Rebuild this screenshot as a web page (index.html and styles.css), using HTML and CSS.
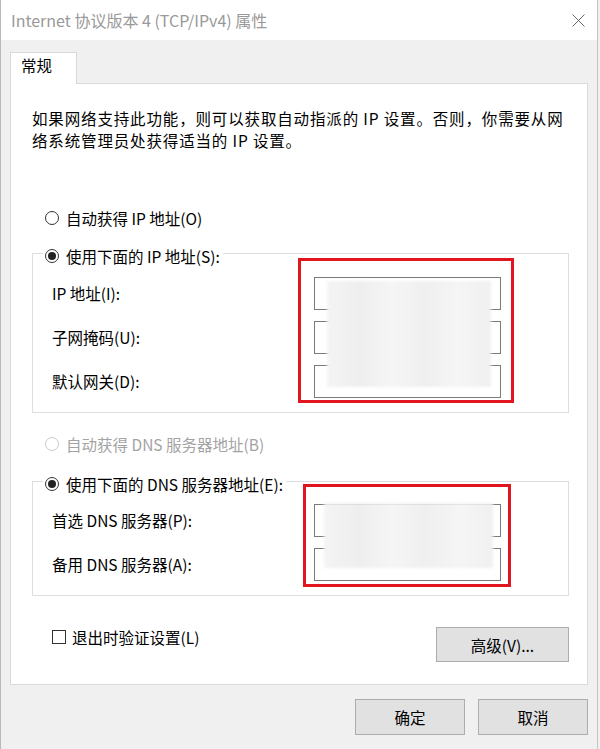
FILE: index.html
```html
<!DOCTYPE html>
<html lang="zh-CN">
<head>
<meta charset="utf-8">
<title>Internet 协议版本 4 (TCP/IPv4) 属性</title>
<link rel="stylesheet" href="styles.css">
</head>
<body>
<div class="window">
  <div class="titlebar">
    <span class="title">Internet 协议版本 4 (TCP/IPv4) 属性</span>
    <svg class="close" width="13" height="13" viewBox="0 0 13 13"><path d="M0.5 0.5 L12.5 12.5 M12.5 0.5 L0.5 12.5" stroke="#666" stroke-width="1" fill="none"/></svg>
  </div>
  <div class="client">
    <div class="tabs"><div class="tab">常规</div></div>
    <div class="panel">
      <p class="desc">如果网络支持此功能，则可以获取自动指派的 IP 设置。否则，你需要从网<br>络系统管理员处获得适当的 IP 设置。</p>

      <div class="opt opt-first"><span class="radio"></span><span>自动获得 IP 地址(O)</span></div>

      <fieldset class="group group-ip">
        <legend><span class="opt-inline"><span class="radio checked"></span><span>使用下面的 IP 地址(S):</span></span></legend>
        <div class="rows">
          <div class="labels">
            <div class="label">IP 地址(I):</div>
            <div class="label">子网掩码(U):</div>
            <div class="label">默认网关(D):</div>
          </div>
          <div class="inputs">
            <div class="field"></div>
            <div class="field"></div>
            <div class="field"></div>
            <div class="blur blur-ip"></div>
            <div class="mark mark-ip"></div>
          </div>
        </div>
      </fieldset>

      <div class="opt opt-disabled"><span class="radio disabled"></span><span>自动获得 DNS 服务器地址(B)</span></div>

      <fieldset class="group group-dns">
        <legend><span class="opt-inline"><span class="radio checked"></span><span>使用下面的 DNS 服务器地址(E):</span></span></legend>
        <div class="rows">
          <div class="labels">
            <div class="label">首选 DNS 服务器(P):</div>
            <div class="label">备用 DNS 服务器(A):</div>
          </div>
          <div class="inputs">
            <div class="field"></div>
            <div class="field"></div>
            <div class="blur blur-dns"></div>
            <div class="mark mark-dns"></div>
          </div>
        </div>
      </fieldset>

      <div class="bottom-row">
        <div class="check-line"><span class="checkbox"></span><span>退出时验证设置(L)</span></div>
        <button class="btn btn-adv">高级(V)...</button>
      </div>
    </div>
    <div class="actions">
      <button class="btn btn-main">确定</button>
      <button class="btn btn-main">取消</button>
    </div>
  </div>
</div>
</body>
</html>
```

FILE: styles.css
```css
* { box-sizing: border-box; }

html, body {
  margin: 0;
  padding: 0;
  background: #f0f0f0;
}

body {
  font-family: "Noto Sans CJK SC", "Microsoft YaHei", sans-serif;
  font-size: 15.5px;
  color: #000;
}

.window {
  width: 598px;
  height: 749px;
  border-left: 1px solid #b9b9b9;
  border-right: 1px solid #c4c4c4;
  background: #f0f0f0;
  overflow: hidden;
}

.titlebar {
  height: 40px;
  background: #fff;
  display: flex;
  align-items: center;
  justify-content: space-between;
  padding: 0 12px 0 10px;
}

.title {
  font-size: 16px;
  color: #999;
  line-height: 20px;
}

.close { display: block; }

.client {
  padding: 12px 9px 0 9px;
}

.tabs {
  display: flex;
  position: relative;
  z-index: 1;
  margin-bottom: -1px;
}

.tab {
  width: 67px;
  height: 32px;
  background: #fff;
  border: 1px solid #d9d9d9;
  border-bottom: none;
  padding-left: 10px;
  line-height: 25px;
  font-size: 15.5px;
}

.panel {
  height: 602px;
  background: #fff;
  border: 1px solid #d9d9d9;
  padding: 23px 18px 0 21px;
}

.desc {
  margin: 0;
  line-height: 22px;
  font-size: 15.5px;
  letter-spacing: 0.85px;
}

.opt {
  display: flex;
  align-items: center;
  height: 20px;
  margin-left: 13px;
}

.opt-first { margin-top: 57px; }

.opt-inline {
  display: inline-flex;
  align-items: center;
  height: 20px;
}

.radio {
  width: 14px;
  height: 14px;
  border: 1px solid #333;
  border-radius: 50%;
  background: #fff;
  margin-right: 7px;
  display: inline-flex;
  align-items: center;
  justify-content: center;
  flex: none;
}

.radio.checked::after {
  content: "";
  width: 8px;
  height: 8px;
  border-radius: 50%;
  background: #222;
}

.radio.disabled {
  border-color: #cacaca;
}

.opt-disabled {
  color: #a3a3a3;
  margin-top: 21px;
}

.group {
  margin: 0;
  border: 1px solid #dedede;
  min-width: 0;
}

.group legend {
  padding: 0 3px 0 2px;
  margin-left: -9px;
  height: 20px;
  line-height: 20px;
}

.group-ip {
  margin-top: 15px;
  padding: 8px 67px 9px 19px;
}

.group-dns {
  margin-top: 17px;
  padding: 7px 67px 9px 19px;
}

.rows {
  display: flex;
}

.labels {
  flex: 1;
  display: flex;
  flex-direction: column;
}

.label {
  height: 44px;
  line-height: 44px;
}

.inputs {
  width: 187px;
  position: relative;
  display: flex;
  flex-direction: column;
  gap: 11px;
  padding-top: 6px;
}

.field {
  height: 33px;
  border: 1px solid #7a7a7a;
  background: #fff;
}

.blur {
  position: absolute;
  background: linear-gradient(90deg, #f4f4f4 0%, #eeeeee 20%, #f5f5f5 40%, #efefef 60%, #f5f5f5 80%, #f0f0f0 100%);
  filter: blur(1.5px);
}

.blur-ip { left: 13px; top: 10px; width: 164px; height: 106px; }
.blur-dns { left: 10px; top: 5px; width: 169px; height: 65px; }

.mark {
  position: absolute;
  border: 3px solid #e0151f;
}

.mark-ip { left: -16px; top: -13px; width: 216px; height: 145px; }
.mark-dns { left: -11px; top: -14px; width: 208px; height: 103px; }

.bottom-row {
  margin-top: 31px;
  display: flex;
  justify-content: space-between;
  align-items: flex-start;
}

.check-line {
  display: flex;
  align-items: center;
  height: 20px;
  margin-left: 20px;
}

.checkbox {
  width: 14px;
  height: 14px;
  border: 1px solid #333;
  background: #fff;
  margin-right: 6px;
}

.btn {
  font-family: inherit;
  font-size: 15.5px;
  color: #000;
  background: #e1e1e1;
  border: 1px solid #adadad;
  padding: 0;
  border-radius: 0;
}

.btn-adv {
  width: 133px;
  height: 35px;
}

.actions {
  margin-top: 14px;
  display: flex;
  justify-content: flex-end;
  gap: 13px;
}

.btn-main {
  width: 110px;
  height: 36px;
}
```
